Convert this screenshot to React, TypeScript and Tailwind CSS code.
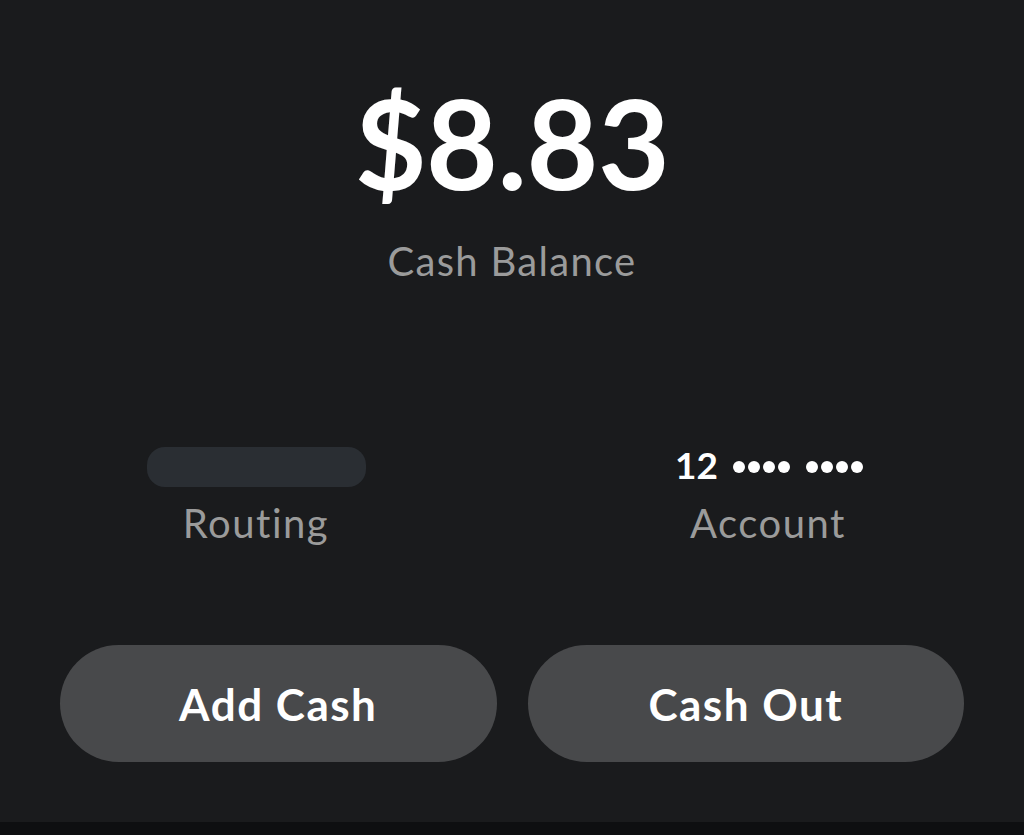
import React from 'react';

function Dots() {
  return (
    <span className="flex gap-[3px]">
      {[0, 1, 2, 3].map((i) => (
        <span key={i} className="block h-[12px] w-[12px] rounded-full bg-white" />
      ))}
    </span>
  );
}

export default function App() {
  return (
    <div className="h-[835px] w-full bg-[#1a1b1d] flex flex-col font-['Lato',sans-serif] [font-variant-ligatures:none] overflow-hidden">
      <main className="flex-1 flex flex-col">
        {/* Balance */}
        <div className="flex flex-col items-center pt-[80px]">
          <h1 className="text-[124px] leading-none font-bold text-white tracking-[-0.5px]">$8.83</h1>
          <p className="mt-[37px] text-[40px] leading-none text-[#9b9b9b] tracking-[1.3px]">Cash Balance</p>
        </div>

        {/* Routing / Account */}
        <div className="grid grid-cols-2 mt-[166px]">
          <div className="flex flex-col items-center">
            <div className="h-10 flex items-center">
              <div className="h-10 w-[219px] rounded-[18px] bg-[#2a2e33]" />
            </div>
            <span className="mt-[16px] text-[40px] leading-none text-[#9b9b9b] tracking-[1.5px]">Routing</span>
          </div>
          <div className="flex flex-col items-center">
            <div className="h-10 flex items-center gap-[15px] pl-[2px] pb-[5px]">
              <span className="text-[37px] leading-none font-bold text-white">12</span>
              <span className="flex gap-[16px] pt-[4px]">
                <Dots />
                <Dots />
              </span>
            </div>
            <span className="mt-[16px] text-[40px] leading-none text-[#9b9b9b] tracking-[1.5px]">Account</span>
          </div>
        </div>

        {/* Actions */}
        <div className="grid grid-cols-2 gap-[31px] px-[60px] mt-[102px]">
          <button className="h-[117px] rounded-full bg-[#48494b] text-white text-[44px] font-bold tracking-[1.5px]">Add Cash</button>
          <button className="h-[117px] rounded-full bg-[#48494b] text-white text-[44px] font-bold tracking-[1.5px]">Cash Out</button>
        </div>
      </main>
      <div className="h-[13px] bg-[#0e0f11]" />
    </div>
  );
}
